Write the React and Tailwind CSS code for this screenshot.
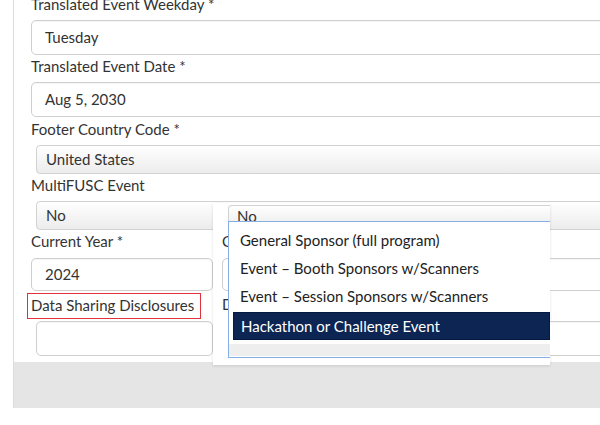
import React from 'react'

const font = { fontFamily: 'Lato, "Open Sans", sans-serif' }

function Label({ children, className = '' }) {
  return (
    <div className={`h-[20px] leading-[20px] text-[15px] text-[#333] whitespace-nowrap ${className}`}>
      {children}
    </div>
  )
}

function TextBox({ value, className = '' }) {
  return (
    <div className={`border border-[#cfcfcf] rounded-[5px] bg-white pl-[13px] flex items-center text-[15px] text-[#333] shadow-[inset_0_1px_1px_rgba(0,0,0,0.04)] ${className}`}>
      {value}
    </div>
  )
}

function SelectBox({ value, className = '' }) {
  return (
    <div className={`border border-[#d2d2d2] rounded-[4px] bg-gradient-to-b from-white to-[#ececec] pl-[9px] flex items-center text-[15px] text-[#333] ${className}`}>
      {value}
    </div>
  )
}

const options = [
  'General Sponsor (full program)',
  'Event – Booth Sponsors w/Scanners',
  'Event – Session Sponsors w/Scanners',
]

export default function App() {
  return (
    <div style={font} className="relative w-[600px] h-[425px] overflow-hidden bg-white">
      {/* dropdown backdrop card */}
      <div className="absolute z-[1] left-[213px] top-[203px] w-[337px] h-[162px] bg-white shadow-[0_1px_3px_rgba(0,0,0,0.12)]" />

      <div className="ml-[13px] w-[640px] border-l border-[#dcdcdc]">
        {/* form panel */}
        <div className="bg-white pl-[17px] h-[368px] -mt-[6px]">
          <Label>Translated Event Weekday *</Label>
          <TextBox value="Tuesday" className="mt-[6px] h-[35px]" />

          <Label className="mt-[1px]">Translated Event Date *</Label>
          <TextBox value="Aug 5, 2030" className="mt-[6px] h-[35px]" />

          <Label className="mt-[2px]">Footer Country Code *</Label>
          <SelectBox value="United States" className="mt-[6px] ml-[5px] h-[29px]" />

          <Label className="mt-[1px]">MultiFUSC Event</Label>
          <SelectBox value="No" className="mt-[6px] ml-[5px] h-[29px]" />

          <div className="grid grid-cols-[182px_1fr] gap-x-[9px]">
            <div>
              <Label className="mt-[1px]">Current Year *</Label>
              <TextBox value="2024" className="mt-[7px] h-[33px]" />
              <div className="mt-[2px] -ml-[4px] w-[174px] h-[26px] border border-[#e0323c] pl-[3px] pt-[1px]">
                <Label>Data Sharing Disclosures</Label>
              </div>
              <TextBox value="" className="mt-[2px] ml-[5px] h-[35px]" />
            </div>
            <div className="relative z-[2]">
              <Label className="mt-[1px]">Current Quarter *</Label>
              <TextBox value="" className="mt-[7px] h-[33px]" />
              <div className="mt-[2px] h-[26px] pt-[1px]">
                <Label>Data Sharing Level</Label>
              </div>
              <TextBox value="" className="mt-[2px] ml-[8px] h-[35px]" />
            </div>
          </div>
        </div>
        {/* footer band */}
        <div className="h-[46px] bg-[#e5e5e5]" />
      </div>

      {/* open dropdown list */}
      <div className="absolute z-[3] left-[228px] top-[205px] w-[322px]">
        <div className="h-[16px] rounded-tl-[4px] border-l border-t border-[#d2d2d2] bg-gradient-to-b from-white to-[#f1f1f1] pl-[8px] text-[15px] leading-[20px] text-[#333] overflow-hidden">
          No
        </div>
        <div className="h-[137px] border border-r-0 border-[#85aee8] bg-white pt-[4px] flex flex-col">
          {options.map(o => (
            <div key={o} className="h-[28px] pl-[11px] flex items-center text-[15px] text-[#222] whitespace-nowrap">
              {o}
            </div>
          ))}
          <div className="mt-[2px] ml-[4px] h-[28px] pl-[7px] flex items-center bg-[#0c2553] border border-[#061a40] text-[15px] text-white whitespace-nowrap">
            Hackathon or Challenge Event
          </div>
          <div className="mt-[4px] h-[12px] bg-[#eeeeee]" />
        </div>
      </div>
    </div>
  )
}
